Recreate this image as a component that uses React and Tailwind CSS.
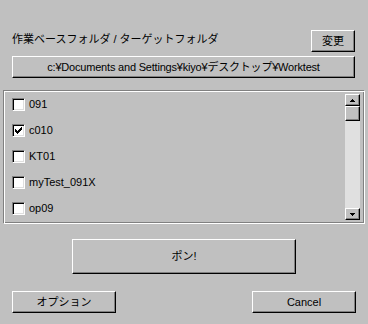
import React from "react";

const Btn = ({ className = "", children }) => (
  <div
    className={
      "flex items-center justify-center bg-[#c0c0c0] border border-t-white border-l-white border-r-black border-b-black shadow-[inset_-1px_-1px_0_#808080] text-black " +
      className
    }
  >
    {children}
  </div>
);

const Check = ({ checked }) => (
  <div className="w-[13px] h-[13px] shrink-0 bg-white border border-t-[#808080] border-l-[#808080] border-r-white border-b-white shadow-[inset_1px_1px_0_#000,inset_-1px_-1px_0_#dfdfdf] flex items-center justify-center">
    {checked && (
      <svg width="7" height="7" viewBox="0 0 7 7" shapeRendering="crispEdges">
        <rect x="0" y="2" width="1" height="3" fill="#000" />
        <rect x="1" y="3" width="1" height="3" fill="#000" />
        <rect x="2" y="4" width="1" height="3" fill="#000" />
        <rect x="3" y="3" width="1" height="3" fill="#000" />
        <rect x="4" y="2" width="1" height="3" fill="#000" />
        <rect x="5" y="1" width="1" height="3" fill="#000" />
        <rect x="6" y="0" width="1" height="3" fill="#000" />
      </svg>
    )}
  </div>
);

const items = [
  { label: "091", checked: false },
  { label: "c010", checked: true },
  { label: "KT01", checked: false },
  { label: "myTest_091X", checked: false },
  { label: "op09", checked: false },
];

const ScrollBtn = ({ up }) => (
  <div className="w-[15px] h-[12px] bg-[#c0c0c0] border border-t-white border-l-white border-r-black border-b-black shadow-[inset_-1px_-1px_0_#808080] flex items-center justify-center">
    <svg width="5" height="3" viewBox="0 0 5 3" shapeRendering="crispEdges">
      {up ? (
        <>
          <rect x="2" y="0" width="1" height="1" fill="#000" />
          <rect x="1" y="1" width="3" height="1" fill="#000" />
          <rect x="0" y="2" width="5" height="1" fill="#000" />
        </>
      ) : (
        <>
          <rect x="0" y="0" width="5" height="1" fill="#000" />
          <rect x="1" y="1" width="3" height="1" fill="#000" />
          <rect x="2" y="2" width="1" height="1" fill="#000" />
        </>
      )}
    </svg>
  </div>
);

export default function App() {
  return (
    <div
      className="w-[368px] h-[324px] bg-[#c0c0c0] text-[11px] leading-none text-black overflow-hidden"
      style={{ fontFamily: '"Liberation Sans","Noto Sans CJK JP",sans-serif' }}
    >
      <div className="pt-[30px] px-[12px]">
        <div className="flex justify-between items-start h-[22px]">
          <div className="mt-[4px] leading-[11px]">作業ベースフォルダ / ターゲットフォルダ</div>
          <Btn className="w-[44px] h-[22px] mr-[1px]">変更</Btn>
        </div>
        <Btn className="mt-[4px] h-[22px] w-[343px]">
          <span className="tracking-[-0.2px]">c:¥Documents and Settings¥kiyo¥デスクトップ¥Worktest</span>
        </Btn>
      </div>

      <div className="mt-[12px] mx-[3px] h-[134px] border border-t-[#808080] border-l-[#808080] border-r-white border-b-white shadow-[inset_1px_1px_0_#fff,inset_-1px_-1px_0_#808080] flex">
        <div className="flex-1 flex flex-col pl-[8px]">
          {items.map((it) => (
            <div key={it.label} className="h-[26px] flex items-center gap-[4px]">
              <Check checked={it.checked} />
              <span className="leading-[11px]">{it.label}</span>
            </div>
          ))}
        </div>
        <div className="mt-[3px] mr-[4px] flex flex-col">
          <ScrollBtn up />
          <div className="w-[15px] h-[15px] bg-[#c0c0c0] border border-t-white border-l-white border-r-black border-b-black shadow-[inset_-1px_-1px_0_#808080]" />
          <div className="w-[15px] h-[87px] bg-[#e0e0e0]" />
          <ScrollBtn />
        </div>
      </div>

      <div className="flex justify-center mt-[15px]">
        <Btn className="w-[224px] h-[35px]">ポン!</Btn>
      </div>

      <div className="flex justify-between px-[12px] mt-[17px]">
        <Btn className="w-[104px] h-[22px]">オプション</Btn>
        <Btn className="w-[104px] h-[22px]">Cancel</Btn>
      </div>
    </div>
  );
}
